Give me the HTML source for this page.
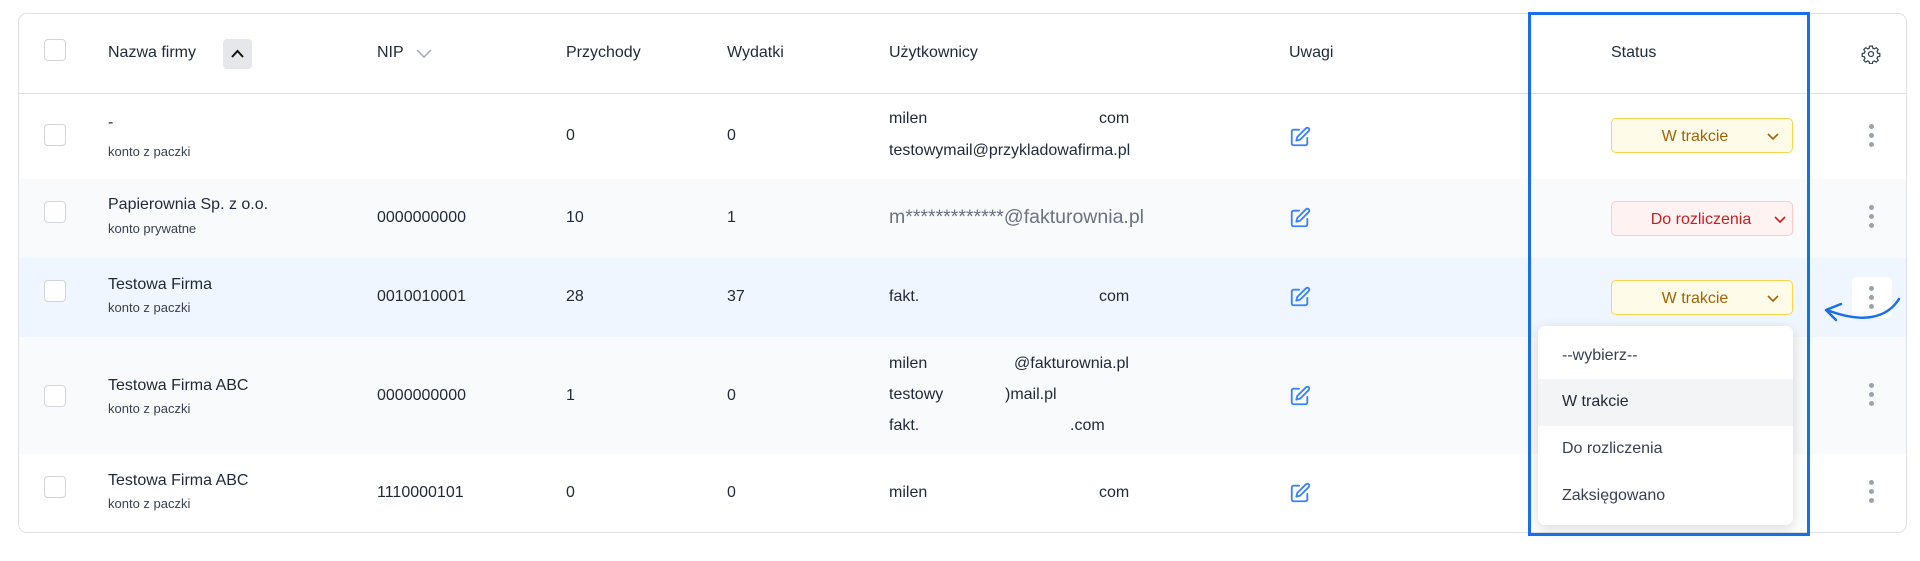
<!DOCTYPE html>
<html><head><meta charset="utf-8"><style>
body{margin:0;width:1920px;height:561px;background:#fff;font-family:"Liberation Sans",sans-serif;color:#1f2937;position:relative;overflow:hidden}
.card{position:absolute;left:18px;top:13px;width:1887px;height:518px;border:1px solid #dfe1e5;border-radius:9px;overflow:hidden;background:#fff}
.row{position:absolute;left:0;width:1887px}
.t{position:absolute;white-space:nowrap;font-size:16px}
.s{font-size:13px;color:#374151}
.cb{position:absolute;left:25px;width:20px;height:20px;border:1px solid #d1d5db;border-radius:4px;background:#fff}
.pill{position:absolute;left:1592px;width:182px;height:35px;border-radius:5px;font-size:16px;line-height:35px;box-sizing:border-box}
.dots{position:absolute;left:1850px;width:4px}
.dots i{display:block;width:5px;height:5px;border-radius:50%;background:#9ca3af;margin-bottom:4px}
</style></head><body>
<div class="card">
 <!-- header -->
 <div class="row" style="top:0;height:79px;border-bottom:1px solid #dfe1e5">
  <div class="cb" style="top:25px"></div>
  <div class="t" style="left:89px;top:30px">Nazwa firmy</div>
  <div style="position:absolute;left:204px;top:25px;width:29px;height:30px;background:#e5e7eb;border-radius:4px"><svg width="29" height="30"><path d="M9 18l5.5-6 5.5 6" fill="none" stroke="#111" stroke-width="2"/></svg></div>
  <div class="t" style="left:358px;top:30px">NIP</div>
  <svg style="position:absolute;left:396px;top:32px" width="18" height="14"><path d="M2 4l7 7 7-7" fill="none" stroke="#9ca3af" stroke-width="1.4"/></svg>
  <div class="t" style="left:547px;top:30px">Przychody</div>
  <div class="t" style="left:708px;top:30px">Wydatki</div>
  <div class="t" style="left:870px;top:30px">Użytkownicy</div>
  <div class="t" style="left:1270px;top:30px">Uwagi</div>
  <div class="t" style="left:1592px;top:30px">Status</div>
  <svg style="position:absolute;left:1842px;top:30px" width="20" height="20" viewBox="0 0 24 24"><path d="M10.3 2.5h3.4l.5 2.6 1.9.8 2.2-1.5 2.4 2.4-1.5 2.2.8 1.9 2.6.5v3.4l-2.6.5-.8 1.9 1.5 2.2-2.4 2.4-2.2-1.5-1.9.8-.5 2.6h-3.4l-.5-2.6-1.9-.8-2.2 1.5-2.4-2.4 1.5-2.2-.8-1.9-2.6-.5v-3.4l2.6-.5.8-1.9-1.5-2.2 2.4-2.4 2.2 1.5 1.9-.8z" fill="none" stroke="#374151" stroke-width="1.5" stroke-linejoin="round"/><circle cx="12" cy="12" r="3" fill="none" stroke="#374151" stroke-width="1.5"/></svg>
 </div>
 <!-- row1 -->
 <div class="row" style="top:80px;height:85px;background:#fff">
  <div class="cb" style="top:30px"></div>
  <div class="t" style="left:89px;top:20px">-</div>
  <div class="t s" style="left:89px;top:50px">konto z paczki</div>
  <div class="t" style="left:547px;top:33px">0</div>
  <div class="t" style="left:708px;top:33px">0</div>
  <div class="t" style="left:870px;top:16px">milen</div><div class="t" style="left:1080px;top:16px">com</div>
  <div class="t" style="left:870px;top:48px">testowymail@przykladowafirma.pl</div>
  <svg class="ed" style="position:absolute;left:1270px;top:32px" width="22" height="22" viewBox="0 0 24 24"><path d="M11 4H5a2 2 0 0 0-2 2v13a2 2 0 0 0 2 2h13a2 2 0 0 0 2-2v-6" fill="none" stroke="#3b82f6" stroke-width="2" stroke-linecap="round"/><path d="M18.5 2.5a2.1 2.1 0 0 1 3 3L12 15l-4 1 1-4z" fill="none" stroke="#3b82f6" stroke-width="2" stroke-linejoin="round"/></svg>
  <div class="pill" style="top:24px;background:#fefce8;border:1.5px solid #fcd34d;color:#a16207"><span style="position:absolute;left:18px;width:130px;text-align:center">W trakcie</span><svg style="position:absolute;left:155px;top:13px" width="12" height="9"><path d="M1 2l5 5 5-5" fill="none" stroke="#a16207" stroke-width="1.6"/></svg></div>
  <div class="dots" style="top:30px"><i></i><i></i><i></i></div>
 </div>
 <!-- row2 -->
 <div class="row" style="top:165px;height:79px;background:#f9fafb">
  <div class="cb" style="top:22px"></div>
  <div class="t" style="left:89px;top:17px">Papierownia Sp. z o.o.</div>
  <div class="t s" style="left:89px;top:42px">konto prywatne</div>
  <div class="t" style="left:358px;top:30px">0000000000</div>
  <div class="t" style="left:547px;top:30px">10</div>
  <div class="t" style="left:708px;top:30px">1</div>
  <div class="t" style="left:870px;top:27px;font-size:19.5px;color:#6b7280">m*************@fakturownia.pl</div>
  <svg style="position:absolute;left:1270px;top:28px" width="22" height="22" viewBox="0 0 24 24"><path d="M11 4H5a2 2 0 0 0-2 2v13a2 2 0 0 0 2 2h13a2 2 0 0 0 2-2v-6" fill="none" stroke="#3b82f6" stroke-width="2" stroke-linecap="round"/><path d="M18.5 2.5a2.1 2.1 0 0 1 3 3L12 15l-4 1 1-4z" fill="none" stroke="#3b82f6" stroke-width="2" stroke-linejoin="round"/></svg>
  <div class="pill" style="top:22px;background:#fef2f2;border:1.5px solid #fecaca;color:#c81e1e"><span style="position:absolute;left:18px;width:142px;text-align:center">Do rozliczenia</span><svg style="position:absolute;left:162px;top:13px" width="12" height="9"><path d="M1 2l5 5 5-5" fill="none" stroke="#c81e1e" stroke-width="1.6"/></svg></div>
  <div class="dots" style="top:26px"><i></i><i></i><i></i></div>
 </div>
 <!-- row3 -->
 <div class="row" style="top:244px;height:79px;background:#eff6ff">
  <div class="cb" style="top:22px"></div>
  <div class="t" style="left:89px;top:18px">Testowa Firma</div>
  <div class="t s" style="left:89px;top:42px">konto z paczki</div>
  <div class="t" style="left:358px;top:30px">0010010001</div>
  <div class="t" style="left:547px;top:30px">28</div>
  <div class="t" style="left:708px;top:30px">37</div>
  <div class="t" style="left:870px;top:30px">fakt.</div><div class="t" style="left:1080px;top:30px">com</div>
  <svg style="position:absolute;left:1270px;top:28px" width="22" height="22" viewBox="0 0 24 24"><path d="M11 4H5a2 2 0 0 0-2 2v13a2 2 0 0 0 2 2h13a2 2 0 0 0 2-2v-6" fill="none" stroke="#3b82f6" stroke-width="2" stroke-linecap="round"/><path d="M18.5 2.5a2.1 2.1 0 0 1 3 3L12 15l-4 1 1-4z" fill="none" stroke="#3b82f6" stroke-width="2" stroke-linejoin="round"/></svg>
  <div class="pill" style="top:22px;background:#fefce8;border:1.5px solid #fcd34d;color:#a16207"><span style="position:absolute;left:18px;width:130px;text-align:center">W trakcie</span><svg style="position:absolute;left:155px;top:13px" width="12" height="9"><path d="M1 2l5 5 5-5" fill="none" stroke="#a16207" stroke-width="1.6"/></svg></div>
  <div style="position:absolute;left:1833px;top:19px;width:40px;height:41px;background:#fff;border-radius:5px"></div>
  <div class="dots" style="top:28px"><i></i><i></i><i></i></div>
 </div>
 <!-- row4 -->
 <div class="row" style="top:323px;height:117px;background:#f9fafb">
  <div class="cb" style="top:48px"></div>
  <div class="t" style="left:89px;top:40px">Testowa Firma ABC</div>
  <div class="t s" style="left:89px;top:64px">konto z paczki</div>
  <div class="t" style="left:358px;top:50px">0000000000</div>
  <div class="t" style="left:547px;top:50px">1</div>
  <div class="t" style="left:708px;top:50px">0</div>
  <div class="t" style="left:870px;top:18px">milen</div><div class="t" style="left:995px;top:18px">@fakturownia.pl</div>
  <div class="t" style="left:870px;top:49px">testowy</div><div class="t" style="left:986px;top:49px">)mail.pl</div>
  <div class="t" style="left:870px;top:80px">fakt.</div><div class="t" style="left:1051px;top:80px">.com</div>
  <svg style="position:absolute;left:1270px;top:48px" width="22" height="22" viewBox="0 0 24 24"><path d="M11 4H5a2 2 0 0 0-2 2v13a2 2 0 0 0 2 2h13a2 2 0 0 0 2-2v-6" fill="none" stroke="#3b82f6" stroke-width="2" stroke-linecap="round"/><path d="M18.5 2.5a2.1 2.1 0 0 1 3 3L12 15l-4 1 1-4z" fill="none" stroke="#3b82f6" stroke-width="2" stroke-linejoin="round"/></svg>
  <div class="dots" style="top:46px"><i></i><i></i><i></i></div>
 </div>
 <!-- row5 -->
 <div class="row" style="top:440px;height:78px;background:#fff">
  <div class="cb" style="top:22px"></div>
  <div class="t" style="left:89px;top:18px">Testowa Firma ABC</div>
  <div class="t s" style="left:89px;top:42px">konto z paczki</div>
  <div class="t" style="left:358px;top:30px">1110000101</div>
  <div class="t" style="left:547px;top:30px">0</div>
  <div class="t" style="left:708px;top:30px">0</div>
  <div class="t" style="left:870px;top:30px">milen</div><div class="t" style="left:1080px;top:30px">com</div>
  <svg style="position:absolute;left:1270px;top:28px" width="22" height="22" viewBox="0 0 24 24"><path d="M11 4H5a2 2 0 0 0-2 2v13a2 2 0 0 0 2 2h13a2 2 0 0 0 2-2v-6" fill="none" stroke="#3b82f6" stroke-width="2" stroke-linecap="round"/><path d="M18.5 2.5a2.1 2.1 0 0 1 3 3L12 15l-4 1 1-4z" fill="none" stroke="#3b82f6" stroke-width="2" stroke-linejoin="round"/></svg>
  <div class="dots" style="top:26px"><i></i><i></i><i></i></div>
 </div>
</div>
<!-- dropdown -->
<div style="position:absolute;left:1538px;top:326px;width:255px;height:199px;background:#fff;border-radius:7px;box-shadow:0 4px 14px rgba(0,0,0,.15);overflow:hidden;font-size:16px;color:#374151">
 <div style="position:absolute;left:24px;top:21px">--wybierz--</div>
 <div style="position:absolute;left:0;top:53px;width:255px;height:47px;background:#f3f4f6"></div>
 <div style="position:absolute;left:24px;top:67px;color:#1f2937">W trakcie</div>
 <div style="position:absolute;left:24px;top:114px">Do rozliczenia</div>
 <div style="position:absolute;left:24px;top:161px">Zaksięgowano</div>
</div>
<!-- blue highlight box -->
<div style="position:absolute;left:1528px;top:12px;width:276px;height:518px;border:3px solid #1a6fe8"></div>
<!-- arrow -->
<svg style="position:absolute;left:1815px;top:290px" width="100" height="40"><path d="M84 9C72 28 48 34 12 20" fill="none" stroke="#1a6fe8" stroke-width="2.5" stroke-linecap="round"/><path d="M26 14L11 20l10 10" fill="none" stroke="#1a6fe8" stroke-width="2.5" stroke-linecap="round" stroke-linejoin="round"/></svg>
</body></html>
